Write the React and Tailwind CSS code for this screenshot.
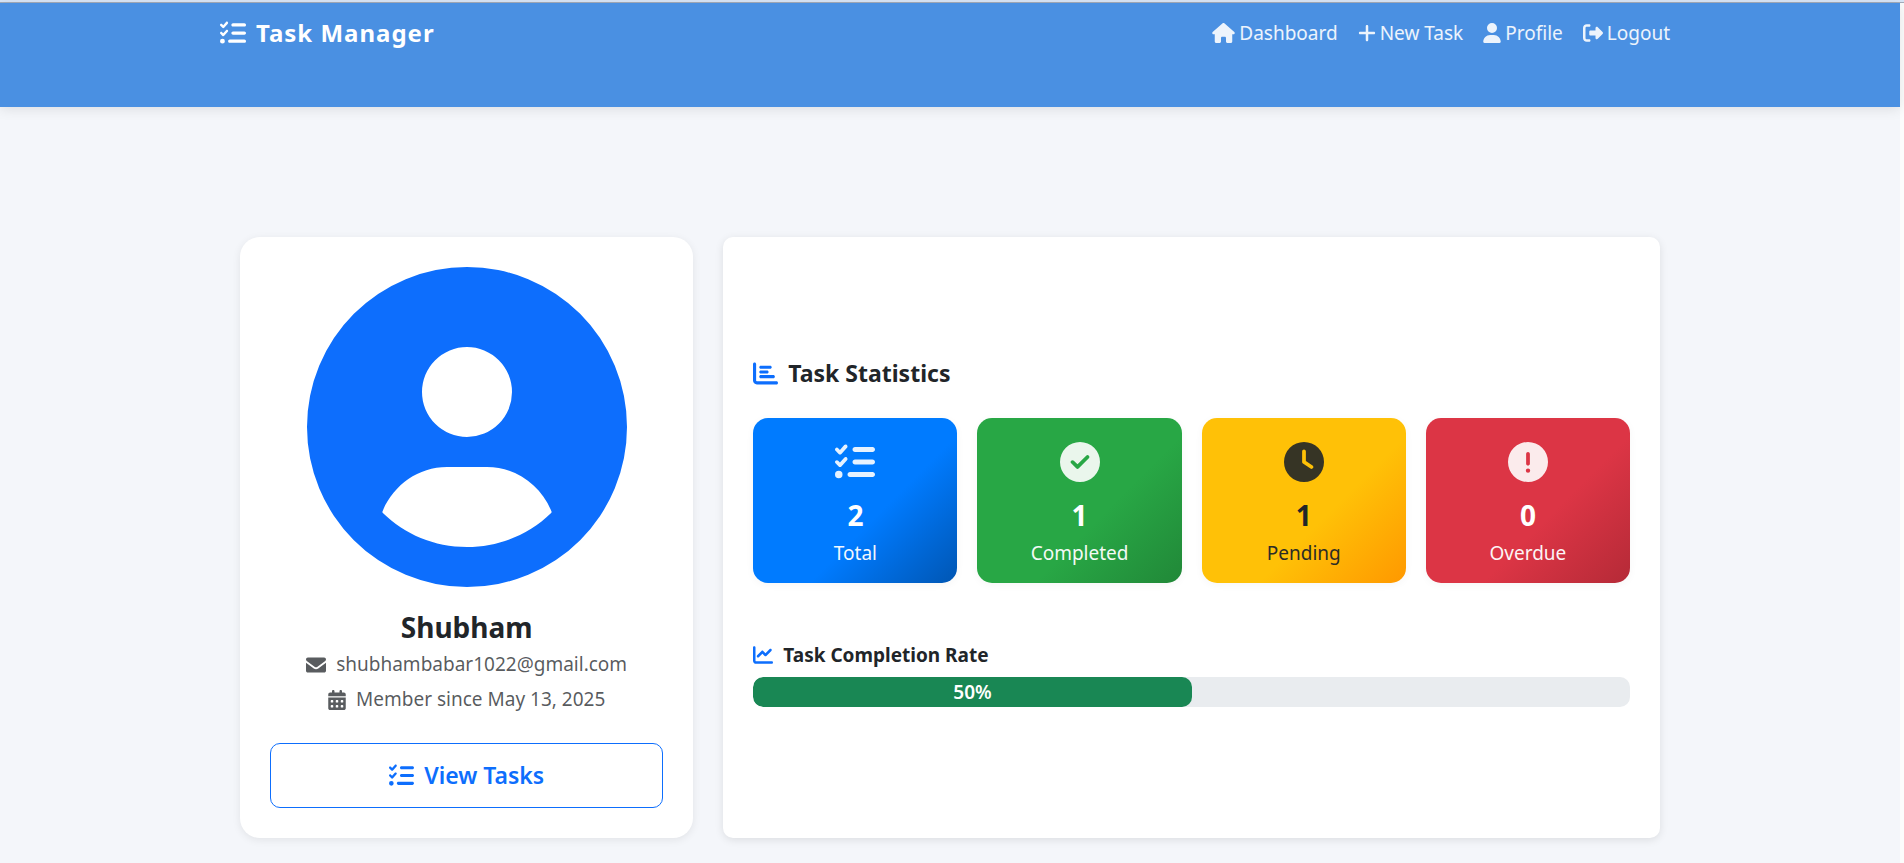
import {
  FaListCheck,
  FaHouse,
  FaPlus,
  FaUser,
  FaRightFromBracket,
  FaCalendarDays,
  FaChartBar,
  FaChartLine,
  FaCircleCheck,
  FaClock,
} from "react-icons/fa6";

const links = [
  { label: "Dashboard", Icon: FaHouse, size: "h-5 w-[23px]" },
  { label: "New Task", Icon: FaPlus, size: "h-5 w-[18px]" },
  { label: "Profile", Icon: FaUser, size: "h-5 w-[18px]" },
  { label: "Logout", Icon: FaRightFromBracket, size: "size-5" },
];

function AvatarIcon({ className }) {
  return (
    <svg viewBox="0 0 512 512" fill="currentColor" fillRule="evenodd" className={className} aria-hidden="true">
      <path d="M256 0a256 256 0 1 1 0 512a256 256 0 1 1 0-512zM256 128a72 72 0 1 0 0 144a72 72 0 1 0 0-144zM224 320C177.4 320 137.8 349.6 120.8 391C120.4 392 120.6 393 121.4 393.6C156 427.5 203.500 448 256 448S356 427.500 390.600 393.600C391.400 393 391.600 392 391.200 391C374.200 349.600 334.600 320 288 320z" />
    </svg>
  );
}

function EnvelopeIcon({ className }) {
  return (
    <svg viewBox="0 0 512 512" fill="currentColor" className={className} aria-hidden="true">
      <path d="M48 64c-26.500 0-48 21.500-48 48 0 15.100 7.100 29.300 19.200 38.400l208 156c17.100 12.800 40.500 12.800 57.600 0l208-156c12.100-9.100 19.200-23.300 19.200-38.400 0-26.500-21.500-48-48-48L48 64zM0 196L0 400c0 26.500 21.500 48 48 48l416 0c26.500 0 48-21.500 48-48l0-204-198.400 148.800c-34.100 25.600-81.100 25.600-115.200 0L0 196z" />
    </svg>
  );
}

function AlertIcon({ className }) {
  return (
    <svg viewBox="0 0 512 512" fill="currentColor" fillRule="evenodd" className={className} aria-hidden="true">
      <path d="M256 0a256 256 0 1 1 0 512a256 256 0 1 1 0-512zM256 128c-13.300 0-24 10.700-24 24v126c0 13.300 10.700 24 24 24s24-10.700 24-24V152c0-13.300-10.700-24-24-24zM256 338a28 28 0 1 0 0 56a28 28 0 1 0 0-56z" />
    </svg>
  );
}

const stats = [
  { label: "Total", value: 2, Icon: FaListCheck, tone: "text-white bg-[linear-gradient(135deg,#007bff_60%,#0056b3)]" },
  { label: "Completed", value: 1, Icon: FaCircleCheck, tone: "text-white bg-[linear-gradient(135deg,#28a745_60%,#218838)]" },
  { label: "Pending", value: 1, Icon: FaClock, tone: "text-[#212529] bg-[linear-gradient(135deg,#ffc107_60%,#ff9800)]" },
  { label: "Overdue", value: 0, Icon: AlertIcon, tone: "text-white bg-[linear-gradient(135deg,#dc3545_60%,#b52a37)]" },
];

function Header() {
  return (
    <header className="bg-[#4a90e2] pb-[44px] shadow-[0_2px_12px_rgba(0,0,0,0.1)]">
      <nav className="mx-auto flex h-[60px] max-w-[1460px] items-center justify-between">
        <a href="#" className="flex items-center gap-[10px] text-2xl font-bold tracking-[1px] text-white">
          <FaListCheck className="size-[26px]" />
          Task Manager
        </a>
        <ul className="flex items-center text-[19px] text-white/90">
          {links.map(({ label, Icon, size }) => (
            <li key={label}>
              <a href="#" className="flex items-center gap-1 px-[10px]">
                <Icon className={size} />
                {label}
              </a>
            </li>
          ))}
        </ul>
      </nav>
    </header>
  );
}

function ProfileCard() {
  return (
    <section className="flex flex-col items-center rounded-[20px] bg-white p-[30px] shadow-[0_2px_8px_rgba(0,0,0,0.08)]">
      <AvatarIcon className="size-[320px] text-[#0d6efd]" />
      <h1 className="mt-5 text-[28px] leading-10 font-bold">Shubham</h1>
      <p className="flex h-[35px] items-center gap-[10px] text-[19px] text-[#212529]/75">
        <EnvelopeIcon className="size-5" />
        shubhambabar1022@gmail.com
      </p>
      <p className="flex h-[35px] items-center gap-[10px] text-[19px] text-[#212529]/75">
        <FaCalendarDays className="h-5 w-[18px]" />
        Member since May 13, 2025
      </p>
      <button
        type="button"
        className="mt-auto flex h-[65px] w-full items-center justify-center gap-[10px] rounded-[10px] border border-[#0d6efd] text-[23px] font-semibold text-[#0d6efd]"
      >
        <FaListCheck className="size-[25px]" />
        View Tasks
      </button>
    </section>
  );
}

function StatCard({ label, value, Icon, tone }) {
  return (
    <div className={`flex flex-col items-center rounded-[15px] pt-6 pb-3 shadow-[0_2px_8px_rgba(0,0,0,0.04)] ${tone}`}>
      <Icon className="size-10 opacity-90" />
      <span className="mt-[13px] text-[28px] leading-10 font-bold">{value}</span>
      <span className="text-[19px] leading-9 opacity-95">{label}</span>
    </div>
  );
}

function StatisticsCard() {
  const rate = 50;
  return (
    <section className="col-span-2 flex flex-col justify-center rounded-[10px] bg-white px-[30px] pt-[30px] pb-10 shadow-[0_2px_8px_rgba(0,0,0,0.1)]">
      <h2 className="flex items-center gap-[10px] text-[23px] leading-[30px] font-bold">
        <FaChartBar className="size-[25px] text-[#0d6efd]" />
        Task Statistics
      </h2>
      <div className="mt-[30px] grid grid-cols-4 gap-5">
        {stats.map((s) => (
          <StatCard key={s.label} {...s} />
        ))}
      </div>
      <h3 className="mt-[60px] flex items-center gap-[10px] text-[19px] leading-6 font-bold">
        <FaChartLine className="size-5 text-[#0d6efd]" />
        Task Completion Rate
      </h3>
      <div
        role="progressbar"
        aria-label="Task Completion Rate"
        aria-valuenow={rate}
        className="mt-[10px] h-[30px] overflow-hidden rounded-[10px] bg-[#e9ecef]"
      >
        <div
          className="flex h-full items-center justify-center rounded-[10px] bg-[#198754] text-[19px] font-semibold text-white"
          style={{ width: `${rate}%` }}
        >
          {rate}%
        </div>
      </div>
    </section>
  );
}

export default function App() {
  return (
    <div className="flex min-h-screen flex-col bg-[#fcfcfc] font-['Noto_Sans','Open_Sans',sans-serif] text-[#212529]">
      <div className="h-[3px] border-b border-[#a3acba] bg-[#d9e6f7]" />
      <div className="mr-1 grow bg-[#f4f6fa]">
        <Header />
        <main className="mx-auto mt-[130px] grid min-h-[601px] max-w-[1420px] grid-cols-3 gap-[30px]">
          <ProfileCard />
          <StatisticsCard />
        </main>
      </div>
    </div>
  );
}
